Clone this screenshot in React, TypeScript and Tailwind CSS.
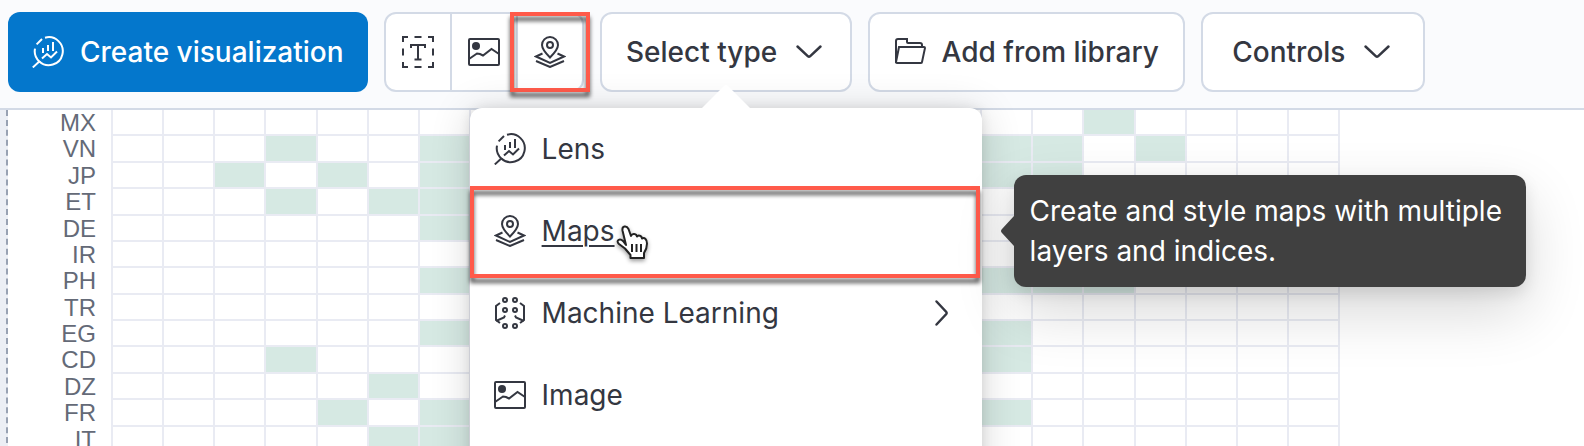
import React from "react";

type IconProps = { className?: string };

const iconBase = {
  width: 32,
  height: 32,
  viewBox: "0 0 32 32",
  fill: "none",
  stroke: "currentColor",
  strokeWidth: 2,
  "aria-hidden": true,
} as const;

function LensIcon({ className = "" }: IconProps) {
  return (
    <svg {...iconBase} className={className}>
      <path d="M13 1.700A14 14 0 1 1 7.300 25.500" />
      <path d="M10 3L4.600 8.400" />
      <path d="M3 12.600A14 14 0 0 0 7.300 25.500L.8 31.400" />
      <path d="M11 12v5M16 9v6M21 6v9" />
      <path d="M10 22.500l5-4.500 4 3.500 6-6" />
    </svg>
  );
}

function TextIcon() {
  return (
    <svg {...iconBase}>
      <path d="M1 6V1h5M26 1h5v5M31 26v5h-5M6 31H1v-5M12.500 1h7M12.500 31h7M1 12.500v7M31 12.500v7" />
      <path d="M9 12V9h14v3M16 9v14M12.500 23.500h7" />
    </svg>
  );
}

function ImageIcon() {
  return (
    <svg {...iconBase}>
      <rect x="1" y="3" width="30" height="26" rx="1" />
      <circle cx="8" cy="10" r="4" fill="currentColor" stroke="none" />
      <path d="M1 23l8-5.500 3 .5 3 1.500 8.500-6.500L31 18" />
    </svg>
  );
}

function MapIcon() {
  return (
    <svg {...iconBase}>
      <path d="M16 21.500C11 16.500 8 13 8 9a8 8 0 0 1 16 0c0 4-3 7.500-8 12.500z" />
      <circle cx="16" cy="9" r="3" />
      <path d="M8.500 17.500L2 20.500 16 27l14-6.500-6.500-3M2 25L16 31l14-6" />
    </svg>
  );
}

function MachineLearningIcon() {
  return (
    <svg {...iconBase}>
      <circle cx="11" cy="3" r="2" />
      <circle cx="21" cy="3" r="2" />
      <circle cx="11" cy="13" r="2" />
      <circle cx="21" cy="13" r="2" />
      <circle cx="11" cy="29" r="2" />
      <circle cx="21" cy="29" r="2" />
      <path d="M6 6L2 9v14l4 3M26 6l4 3v14l-4 3M2 24l8-3.500 1-2M30 24l-8-3.500-1-2" />
    </svg>
  );
}

function FolderIcon() {
  return (
    <svg {...iconBase}>
      <path d="M2 27V5q0-2 2-2h9v3q0 1 1 1h12q2 0 2 2v2" />
      <path d="M5 11h25q1 0 1 1l-3 14q0 1-1 1H3q-1 0-1-1l3-15z" />
    </svg>
  );
}

function Chevron({ className = "" }: IconProps) {
  return (
    <svg {...iconBase} strokeWidth={2.5} strokeLinecap="round" className={className}>
      <path d="M4.500 10.500L15 20.300q1 .8 2 0L27.500 10.500" />
    </svg>
  );
}

function HandCursor() {
  return (
    <svg width="36" height="38" viewBox="0 0 36 38" aria-hidden="true" className="drop-shadow-[0_2px_2px_rgba(0,0,0,0.4)]">
      <path
        d="M11 21L7.500 6.500Q7 3 9.500 2.500t4 2.500L16 12q1-2.500 3.500-2 2 .3 2.500 2.500 1.500-1.500 3.500-.5 1.500.8 1.500 2.500 2-1 3.500.5 1.500 1.500 1.500 4.500 0 5-3 9.500V34H15.500v-3L10 24.500 4 20q-2.500-2.500-.5-4 2-1.500 4.500 1z"
        fill="#fff" stroke="#222" strokeWidth="2" strokeLinejoin="round"
      />
      <path d="M17 20v8M21.500 20v8M26 20v8" stroke="#222" strokeWidth="2" />
    </svg>
  );
}

const columns = Array.from({ length: 24 }, (_, i) => i);

const rows: { label: string; filled: number[] }[] = [
  { label: "MX", filled: [19] },
  { label: "VN", filled: [3, 6, 17, 18, 20] },
  { label: "JP", filled: [2, 4, 6, 17, 18] },
  { label: "ET", filled: [3, 5, 6] },
  { label: "DE", filled: [6] },
  { label: "IR", filled: [] },
  { label: "PH", filled: [6, 17, 18, 19] },
  { label: "TR", filled: [] },
  { label: "EG", filled: [6, 17] },
  { label: "CD", filled: [3, 17] },
  { label: "DZ", filled: [5] },
  { label: "FR", filled: [4, 6, 17] },
  { label: "IT", filled: [5, 6] },
];

function Heatmap() {
  return (
    <div className="flex">
      <div className="w-2 border-r-2 border-dashed border-[#98a2b3] bg-[#eceff5]" />
      <div className="grid h-[343px] w-[88px] shrink-0 grid-rows-13 text-right font-['Liberation_Sans',sans-serif] text-2xl leading-[26px] text-[#646a77]">
        {rows.map((r) => (
          <span key={r.label}>{r.label}</span>
        ))}
      </div>
      <div className="ml-[15px] grid h-[343px] w-[1229px] shrink-0 grid-rows-13 border-l-2 border-[#e9ebf3]">
        {rows.map((r) => (
          <div key={r.label} className="grid grid-cols-24">
            {columns.map((c) => (
              <div
                key={c}
                className={`border-r-2 border-b-2 border-[#e9ebf3] ${r.filled.includes(c) ? "bg-[#d6e9e3]" : "bg-white"}`}
              />
            ))}
          </div>
        ))}
      </div>
    </div>
  );
}

const outlined =
  "flex h-20 items-center justify-center gap-4 rounded-xl border-2 border-[#d3dae6] bg-white px-6 text-[28px] font-medium";
const marker =
  "pointer-events-none absolute border-4 border-[#ff5a4a] drop-shadow-[0_5px_2px_rgba(0,0,0,0.65)]";

type MenuItemProps = {
  icon: React.ReactNode;
  label: string;
  hovered?: boolean;
  arrow?: boolean;
};

function MenuItem({ icon, label, hovered, arrow }: MenuItemProps) {
  return (
    <button type="button" className="flex h-[82px] w-full items-center gap-4 px-6 text-left text-[28px]">
      {icon}
      <span className={hovered ? "underline decoration-2 underline-offset-4" : ""}>{label}</span>
      {hovered && <span className="mt-6 -ml-4"><HandCursor /></span>}
      {arrow && <Chevron className="ml-auto -rotate-90" />}
    </button>
  );
}

function TypeMenu() {
  return (
    <div className="absolute top-24 -left-[130px] z-10 h-[400px] w-[512px] rounded-xl bg-white whitespace-normal shadow-[0_4px_40px_rgba(0,0,0,0.16),0_0_12px_rgba(0,0,0,0.1)]">
      <svg width="48" height="24" viewBox="0 0 48 24" className="absolute -top-6 left-[232px]" aria-hidden="true">
        <path d="M0 24L22 2q2-2 4 0l22 22z" fill="#fff" />
      </svg>
      <MenuItem icon={<LensIcon />} label="Lens" />
      <div className="relative">
        <MenuItem icon={<MapIcon />} label="Maps" hovered />
        <div className={`${marker} -top-1 right-0.5 -bottom-1.5 left-0`} />
        <div role="tooltip" className="absolute top-1/2 left-[544px] w-[512px] -translate-y-1/2 rounded-xl bg-[#404040] p-4 text-[28px] leading-10 text-white shadow-[0_24px_60px_rgba(0,0,0,0.16),0_6px_16px_rgba(0,0,0,0.1)]">
          <svg width="14" height="30" viewBox="0 0 14 30" className="absolute top-1/2 -left-3.5 -translate-y-1/2" aria-hidden="true">
            <path d="M14 0v30L2 17q-2-2 0-4z" fill="#404040" />
          </svg>
          Create and style maps with multiple layers and indices.
        </div>
      </div>
      <MenuItem icon={<MachineLearningIcon />} label="Machine Learning" arrow />
      <MenuItem icon={<ImageIcon />} label="Image" />
    </div>
  );
}

export default function App() {
  return (
    <main className="h-screen overflow-hidden bg-white font-['Inter',sans-serif] text-[#343741]">
      <div className="flex gap-4 border-b-2 border-[#d3dae6] bg-[#fafbfd] px-2 pt-3 pb-4 whitespace-nowrap">
        <button type="button" className="flex h-20 items-center gap-4 rounded-xl bg-[#0477cc] px-6 text-[28px] font-medium text-white">
          <LensIcon />
          Create visualization
        </button>
        <div className="relative">
          <div className="flex h-20 divide-x-2 divide-[#d3dae6] rounded-xl border-2 border-[#d3dae6] bg-white">
            <button type="button" aria-label="Add text" className="px-4"><TextIcon /></button>
            <button type="button" aria-label="Add image" className="px-4"><ImageIcon /></button>
            <button type="button" aria-label="Add map" className="px-4"><MapIcon /></button>
          </div>
          <div className={`${marker} inset-y-0 -right-1.5 w-20`} />
        </div>
        <div className="relative">
          <button type="button" aria-expanded="true" className={`${outlined} min-w-[252px]`}>
            Select type
            <Chevron />
          </button>
          <TypeMenu />
        </div>
        <button type="button" className={outlined}>
          <FolderIcon />
          Add from library
        </button>
        <button type="button" className={`${outlined} min-w-[224px]`}>
          Controls
          <Chevron />
        </button>
      </div>
      <Heatmap />
    </main>
  );
}
